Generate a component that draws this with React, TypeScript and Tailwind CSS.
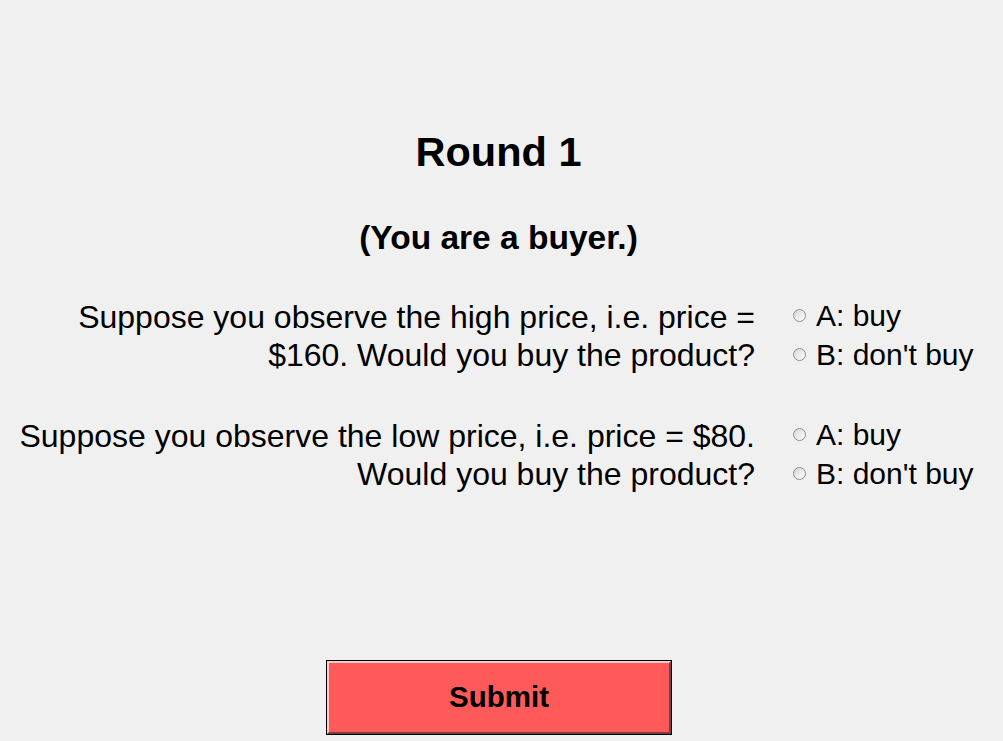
import React from "react";

function Radio() {
  return (
    <span className="inline-block w-[13px] h-[13px] rounded-full border border-[#8e8e8e] bg-gradient-to-br from-[#d6d6d6] to-[#ffffff] shrink-0" />
  );
}

function Option({ label }: { label: string }) {
  return (
    <div className="flex items-center h-[39px]">
      <Radio />
      <span className="ml-[10px]">{label}</span>
    </div>
  );
}

function Question({ text }: { text: string }) {
  return (
    <div className="flex items-start">
      <div className="w-[745px] ml-[10px] pt-[2px] text-right text-[32px] leading-[38px]">{text}</div>
      <div className="ml-[38px] flex flex-col text-[30px] leading-[39px]">
        <Option label="A: buy" />
        <Option label="B: don't buy" />
      </div>
    </div>
  );
}

export default function App() {
  return (
    <div className="w-[1003px] h-[741px] overflow-hidden bg-[#f0f0f0] text-black font-['Liberation_Sans',Arial,sans-serif]">
      <div className="pt-[129px] pr-[6px] text-center text-[41.5px] leading-[46px] font-bold">Round 1</div>
      <div className="mt-[44px] pr-[6px] text-center text-[33.5px] leading-[38px] font-bold">(You are a buyer.)</div>
      <div className="mt-[39px] flex flex-col gap-[41px]">
        <Question text="Suppose you observe the high price, i.e. price = $160. Would you buy the product?" />
        <Question text="Suppose you observe the low price, i.e. price = $80. Would you buy the product?" />
      </div>
      <div className="mt-[167px] pr-[5px] flex justify-center">
        <button className="w-[346px] h-[75px] border border-black bg-[#ff5a5a] p-0">
          <div className="w-full h-full flex items-center justify-center border-2 border-t-[#f7cccc] border-l-[#f7cccc] border-b-[#7d4040] border-r-[#7d4040] text-[29.5px] font-bold">
            Submit
          </div>
        </button>
      </div>
    </div>
  );
}
